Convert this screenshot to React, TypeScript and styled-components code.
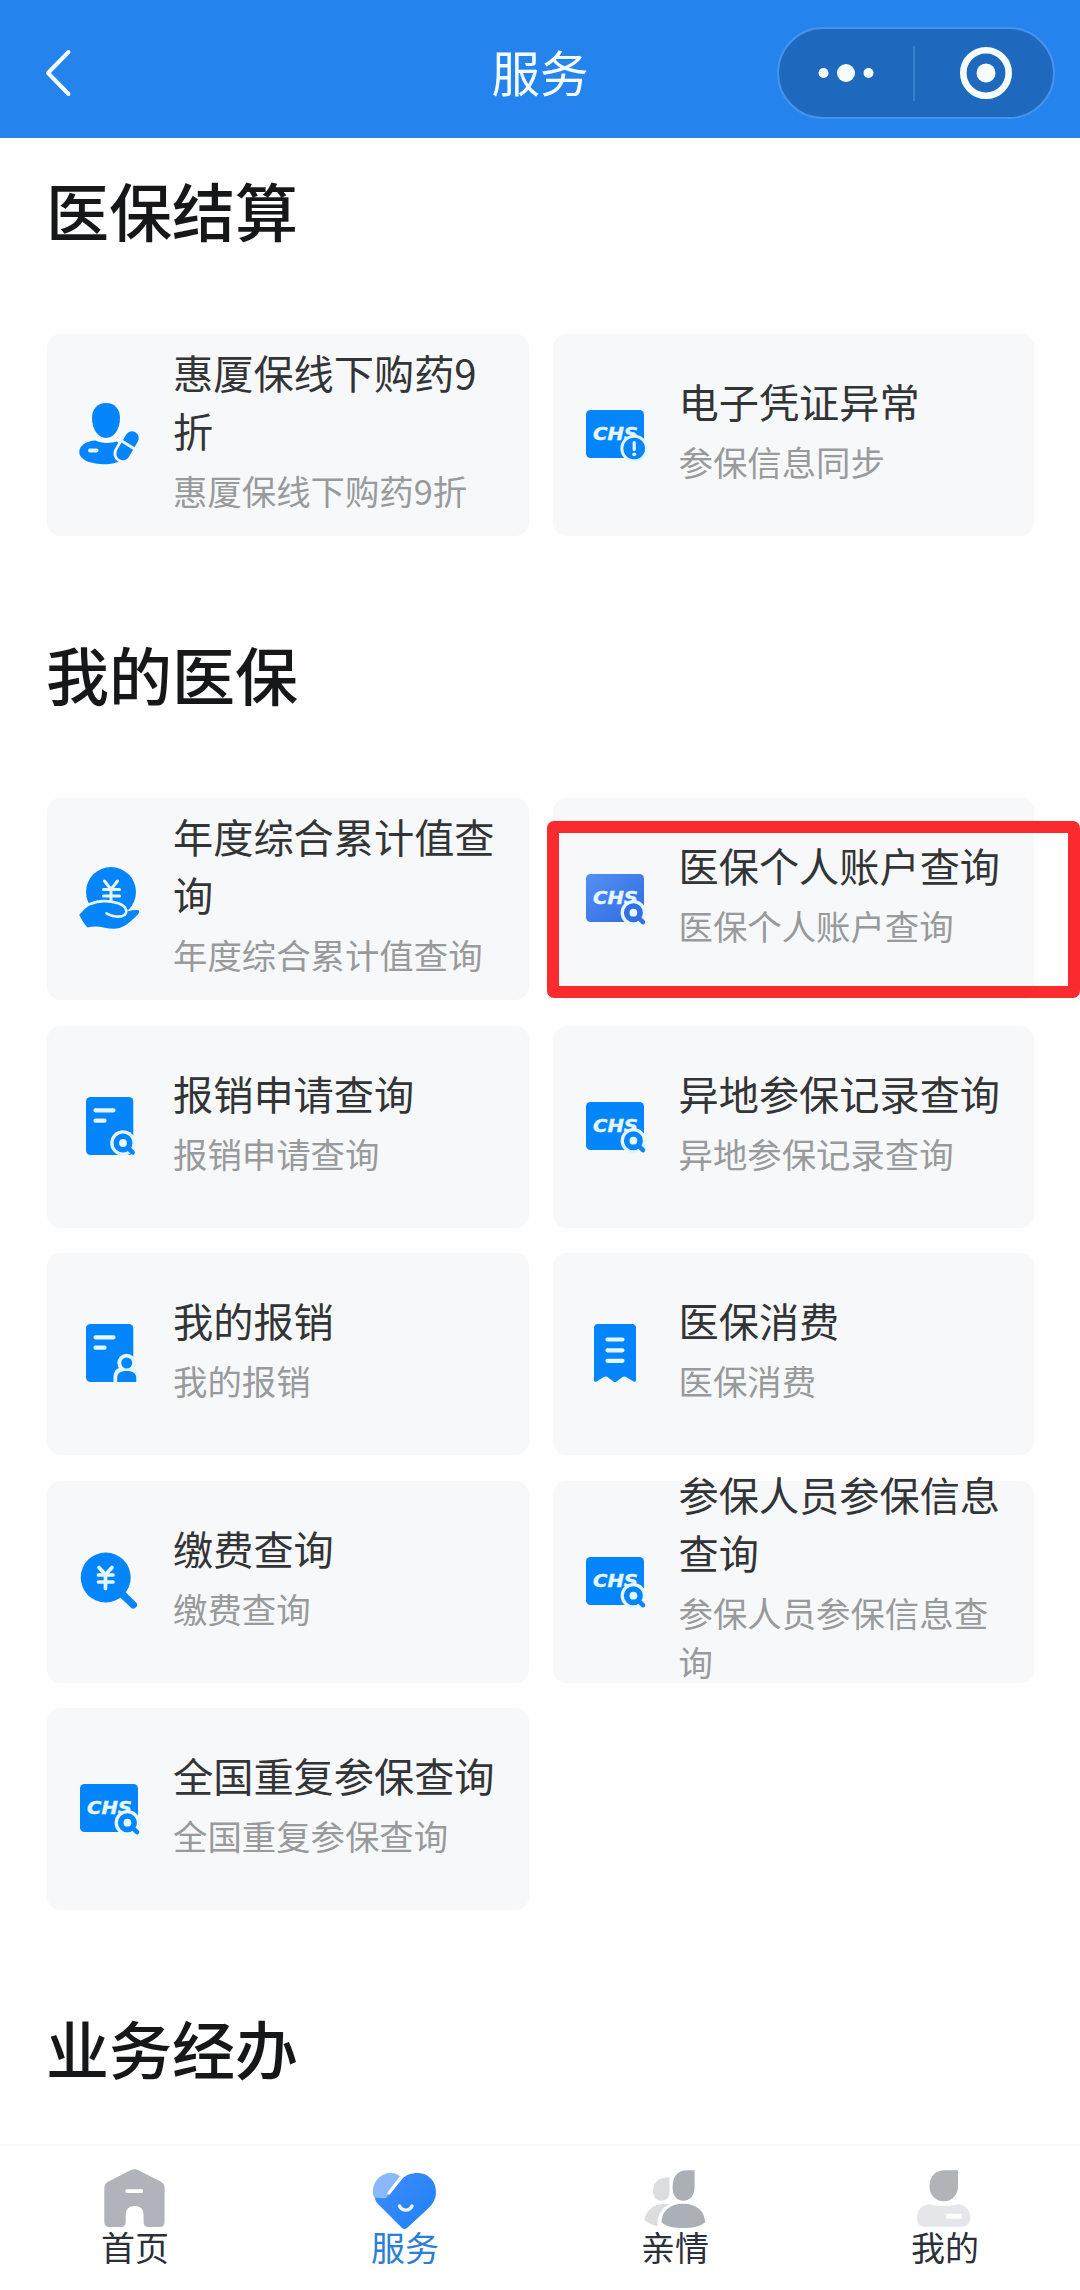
import React from "react";
import styled, { createGlobalStyle } from "styled-components";

const BLUE = "#0585fb";
const CARD = "#f7f8fa";
const PALE = "#e4f6ff";

const GlobalStyle = createGlobalStyle`
  * { box-sizing: border-box; }
  body {
    margin: 0;
    background: #fff;
    font-family: "Noto Sans CJK SC", "Noto Sans", sans-serif;
  }
`;

const Page = styled.div`
  display: flex;
  flex-direction: column;
  width: 1080px;
  height: 2290px;
  overflow: hidden;
  background: #fefefe;
`;

const Header = styled.header`
  flex: none;
  display: grid;
  grid-template-columns: 1fr auto 1fr;
  align-items: center;
  height: 138px;
  padding: 8px 25px 0 44px;
  background: #2483ed;
`;

const BackButton = styled.button`
  justify-self: start;
  display: flex;
  padding: 0;
  border: 0;
  background: none;
`;

const PageTitle = styled.h1`
  margin: 0 0 0 -19px;
  color: #f4fcff;
  font-size: 48.5px;
  font-weight: 400;
  line-height: 60px;
  transform: translateY(-2px);
`;

const Capsule = styled.div`
  justify-self: end;
  display: flex;
  align-items: center;
  width: 278px;
  height: 92px;
  border: 2px solid #4593ec;
  border-radius: 46px;
  background: #1e69be;
`;

const CapsuleButton = styled.button<{ $shift?: number }>`
  flex: 1;
  display: flex;
  justify-content: center;
  padding: 0 0 0 ${(p) => p.$shift ?? 0}px;
  border: 0;
  background: none;
`;

const CapsuleDivider = styled.span`
  width: 2px;
  height: 55px;
  background: #3a7fce;
`;

const Content = styled.main`
  flex: 1;
  min-height: 0;
  overflow: hidden;
  padding: 0 46px 0 47px;
`;

const Section = styled.section<{ $first?: boolean }>`
  padding-top: ${(p) => (p.$first ? 26 : 92)}px;
`;

const SectionTitle = styled.h2`
  margin: 0 0 80px -1px;
  color: #161718;
  font-size: 63px;
  font-weight: 500;
  line-height: 90px;
`;

const Grid = styled.div`
  display: grid;
  grid-template-columns: 1fr 1fr;
  grid-auto-rows: 202px;
  gap: 25.6px 24px;
`;

const Card = styled.article`
  position: relative;
  display: flex;
  align-items: center;
  gap: 31px;
  padding: 0 15px 0 31px;
  border-radius: 14px;
  background: ${CARD};
`;

const CardIcon = styled.svg`
  flex: none;
  width: 64px;
  height: 64px;
`;

const CardText = styled.div`
  flex: 1;
  padding-bottom: 12px;
`;

const CardTitle = styled.div`
  color: #333436;
  font-size: 40.2px;
  line-height: 58px;
`;

const CardNote = styled.div`
  margin-top: 7px;
  color: #989a9b;
  font-size: 34.4px;
  line-height: 49px;
`;

const Highlight = styled.div`
  position: absolute;
  left: -6px;
  top: 23px;
  width: 533px;
  height: 177px;
  border: 12px solid #fa2b2f;
  border-radius: 7px;
`;

const TabBar = styled.nav`
  flex: none;
  display: grid;
  grid-template-columns: repeat(4, 1fr);
  height: 146px;
  border-top: 2px solid #f7f7f8;
  background: #fff;
`;

const Tab = styled.button<{ $active?: boolean }>`
  display: flex;
  flex-direction: column;
  align-items: center;
  padding: 22px 0 0;
  border: 0;
  background: none;
  color: ${(p) => (p.$active ? "#2a80d6" : "#2b303a")};
  font-family: inherit;
  font-size: 34px;
  line-height: 38px;
`;

const TabIcon = styled.svg`
  display: block;
  width: 64px;
  height: 60px;
  overflow: visible;
`;

function Magnifier({ x, y, fill }: { x: number; y: number; fill: string }) {
  return (
    <g>
      <circle cx={x} cy={y} r="12.8" fill={PALE} />
      <path d={`M${x + 4} ${y + 4}L${x + 9.6} ${y + 9.4}`} stroke={fill} strokeWidth="4.6" strokeLinecap="round" />
      <circle cx={x} cy={y} r="6.7" fill={PALE} stroke={fill} strokeWidth="5.6" />
    </g>
  );
}

function ChsCard({ fill = BLUE }: { fill?: string }) {
  return (
    <>
      <rect x="2" y="7" width="58" height="48" rx="4.5" fill={fill} />
      <text
        x="9"
        y="37.2"
        fill={PALE}
        stroke={PALE}
        strokeWidth="0.4"
        fontFamily="DejaVu Sans, sans-serif"
        fontSize="17.5"
        fontWeight="700"
        fontStyle="italic"
        textLength="45"
        lengthAdjust="spacingAndGlyphs"
      >
        CHS
      </text>
    </>
  );
}

function ChsSearch() {
  return (
    <CardIcon viewBox="0 0 64 64">
      <ChsCard />
      <Magnifier x={49.4} y={45.7} fill={BLUE} />
    </CardIcon>
  );
}

function ChsSearchGradient() {
  return (
    <CardIcon viewBox="0 0 64 64">
      <defs>
        <linearGradient id="chsGradient" x1="0" y1="0" x2="1" y2="1">
          <stop offset="0" stopColor="#5590f2" />
          <stop offset="1" stopColor="#2c6be0" />
        </linearGradient>
      </defs>
      <ChsCard fill="url(#chsGradient)" />
      <Magnifier x={49.4} y={45.7} fill="#326fe0" />
    </CardIcon>
  );
}

function ChsAlert() {
  return (
    <CardIcon viewBox="0 0 64 64">
      <ChsCard />
      <circle cx="50.2" cy="45.5" r="13.8" fill={PALE} />
      <circle cx="50.2" cy="45.5" r="10.8" fill={BLUE} />
      <path d="M50.2 39.5V46.5" stroke={PALE} strokeWidth="3.2" strokeLinecap="round" />
      <circle cx="50.2" cy="51.3" r="1.9" fill={PALE} />
    </CardIcon>
  );
}

function PersonPill() {
  return (
    <CardIcon viewBox="0 0 64 64">
      <path d="M28 0C36.5 0 42 6 42 15C42 26 36 35 28 35S14 26 14 15C14 6 19.5 0 28 0Z" fill={BLUE} />
      <path d="M1.3 49C1.3 42 9 38 17.5 37.5C22 40.500 34 40.500 38.500 38.500L44 42V57C38 60.500 32 61.200 27 61.200C14 61.200 1.300 57.500 1.300 49Z" fill={BLUE} />
      <path d="M12 47.500H18.500" stroke={PALE} strokeWidth="4" strokeLinecap="round" />
      <path d="M45 50.500L54 35" stroke={CARD} strokeWidth="19" strokeLinecap="round" />
      <path d="M45 50.500L54 35" stroke={BLUE} strokeWidth="13.500" strokeLinecap="round" />
      <path d="M43 37.500L56.500 46" stroke={PALE} strokeWidth="3" />
    </CardIcon>
  );
}

function YenHand() {
  return (
    <CardIcon viewBox="0 0 64 64">
      <circle cx="33" cy="25" r="25" fill={BLUE} />
      <path
        d="M26.500 14L33 22.500L39.500 14M25.500 22.500H41.500M25.500 29H41.500M33 22.500V36"
        fill="none"
        stroke={PALE}
        strokeWidth="3"
        strokeLinecap="round"
      />
      <path
        d="M1.200 47.800C6 43 10 36.200 22 35.200C33 34.200 44 38.500 46.500 44.500C52 44.500 55 42 61 43.500C62 46.500 58 49.500 54 53C49 57.500 44 61.500 36 61.800C28 62 20 57.500 9.500 60.500C6 57 3 51.500 1.200 47.800Z"
        fill={BLUE}
      />
      <path
        d="M12 37C22 32.500 34 34 41 36.500C47.500 39 50.500 44 46.500 48C42 51 34 49.500 28.500 46.300"
        fill="none"
        stroke={PALE}
        strokeWidth="2.600"
        strokeLinecap="round"
      />
    </CardIcon>
  );
}

function DocumentBase() {
  return (
    <>
      <rect x="8" y="2" width="47.300" height="58" rx="4.500" fill={BLUE} />
      <path d="M17.500 15.300H35.500M17.500 25.700H26.500" stroke={PALE} strokeWidth="4.200" strokeLinecap="round" />
    </>
  );
}

function DocumentSearch() {
  return (
    <CardIcon viewBox="0 0 64 64">
      <DocumentBase />
      <Magnifier x={45} y={48} fill={BLUE} />
    </CardIcon>
  );
}

function DocumentPerson() {
  return (
    <CardIcon viewBox="0 0 64 64">
      <DocumentBase />
      <circle cx="48.700" cy="41" r="9.300" fill={PALE} />
      <path d="M35.500 60V55C35.500 48 40 44.500 48.700 44.500S61 49 61 55V60Z" fill={PALE} />
      <circle cx="48.700" cy="41" r="5.500" fill={BLUE} />
      <path d="M39.200 60V56C39.200 51 42.500 49 48.700 49S58.200 51 58.200 56V60Z" fill={BLUE} />
    </CardIcon>
  );
}

function Receipt() {
  return (
    <CardIcon viewBox="0 0 64 64">
      <path
        d="M14 2H48Q52 2 52 6V58.500Q51.500 60.500 49.500 59.500L41.500 54.800Q40.300 54 39 54.800L32.500 59.500Q31 60.500 29.500 59.500L23 54.800Q21.700 54 20.500 54.800L12.500 59.500Q10.500 60.500 10 58.500V6Q10 2 14 2Z"
        fill={BLUE}
      />
      <path d="M23.500 17.500H38.500M23.500 28.300H38.500M23.500 38.800H38.500" stroke={PALE} strokeWidth="4.200" strokeLinecap="round" />
    </CardIcon>
  );
}

function YenSearch() {
  return (
    <CardIcon viewBox="0 0 64 64">
      <path d="M43 43L55.300 54.800" stroke={BLUE} strokeWidth="7.400" strokeLinecap="round" />
      <circle cx="27.700" cy="27.500" r="25" fill={BLUE} />
      <path
        d="M21 17.500L27.500 24.500L34 17.500M20.500 25H35M20.500 32H35M27.500 24.500V38.500"
        fill="none"
        stroke={PALE}
        strokeWidth="3.700"
        strokeLinecap="round"
      />
    </CardIcon>
  );
}

function HomeIcon() {
  return (
    <TabIcon viewBox="0 0 64 60">
      <path
        d="M28 2Q31.500 0.500 35 2L58.500 14Q61.600 16 61.600 19V54Q61.600 59 56.600 59H45.600Q40.600 59 40.600 54V47Q40.600 38 31.700 38T22.700 47V54Q22.700 59 17.700 59H6.300Q1.300 59 1.300 54V19Q1.300 16 4.500 14Z"
        fill="#b0b3b9"
      />
      <rect x="22.500" y="21.300" width="17.500" height="3.700" rx="1" fill="#fff" />
    </TabIcon>
  );
}

function HeartIcon() {
  return (
    <TabIcon viewBox="0 0 64 60">
      <defs>
        <linearGradient id="heartGradient" x1="0" y1="0" x2="1" y2="1">
          <stop offset="0" stopColor="#3f8df8" />
          <stop offset="1" stopColor="#1f80fa" />
        </linearGradient>
      </defs>
      <path d="M0 26C-1 13 8 5 18 5C23 5 26 7 29 10L14 29.500L2 30Q0.500 29 0 26Z" fill="#8ab8fa" />
      <path
        d="M29 11C33 7 38 5 45 5C56 5 63 14 63 24C63 33 58 38 53 42.500L34 60Q31.500 62 29 60L6 37C3.500 34.500 2 32.500 2 29.800H13Z"
        fill="url(#heartGradient)"
      />
      <path d="M28 9.500L16 25" stroke="#fff" strokeWidth="3.200" strokeLinecap="round" />
      <path d="M26.500 38C29 43.500 36.500 43.500 39 38" fill="none" stroke="#eef6ff" strokeWidth="3.400" strokeLinecap="round" />
    </TabIcon>
  );
}

function FamilyIcon() {
  return (
    <TabIcon viewBox="0 0 64 60">
      <path d="M26.500 9.300V24C26.500 29.500 23 32.700 18.500 32.700C13 32.700 10 28.500 10 23C10 14.500 15.500 9.300 26.500 9.300Z" fill="#dcdddf" />
      <path d="M27 36C19 39 14 47 14.500 58C9 57.500 5 54.500 1.300 52C3 42.500 11 36 20 36Z" fill="#dcdddf" />
      <path d="M51.600 2.300V19C51.600 27.500 47 32.700 40.500 32.700C33.500 32.700 29.600 27.500 29.600 19.500C29.600 9 34 2.300 44 2.300Z" fill="#abafb6" />
      <path d="M40 35.700C53 35.700 62 43 62 54.500C56 59 49 60 40.500 60S24 59 18.500 54.500C18.500 43 27 35.700 40 35.700Z" fill="#abafb6" />
    </TabIcon>
  );
}

function MineIcon() {
  return (
    <TabIcon viewBox="0 0 64 60">
      <path d="M45 2.300V18C45 27 39 33.300 31 33.300C22.500 33.300 16.500 27 16.500 18.500C16.500 8 23 2.300 32 2.300Z" fill="#b0b3b8" />
      <path d="M17 36.200C22 38.500 38 38.500 44 36.200C52 36.500 57.400 42 57.400 49C57.400 56 54 58.800 47 58.800H14C7 58.800 4 56 4 49C4 42 9 36.500 17 36.200Z" fill="#e5e6e9" />
      <rect x="33.300" y="45.800" width="15.500" height="5" rx="1.200" fill="#fff" />
    </TabIcon>
  );
}

interface Service {
  title: string;
  note: string;
  Icon: React.ComponentType;
  highlighted?: boolean;
}

const settlement: Service[] = [
  { title: "惠厦保线下购药9折", note: "惠厦保线下购药9折", Icon: PersonPill },
  { title: "电子凭证异常", note: "参保信息同步", Icon: ChsAlert },
];

const insurance: Service[] = [
  { title: "年度综合累计值查询", note: "年度综合累计值查询", Icon: YenHand },
  { title: "医保个人账户查询", note: "医保个人账户查询", Icon: ChsSearchGradient, highlighted: true },
  { title: "报销申请查询", note: "报销申请查询", Icon: DocumentSearch },
  { title: "异地参保记录查询", note: "异地参保记录查询", Icon: ChsSearch },
  { title: "我的报销", note: "我的报销", Icon: DocumentPerson },
  { title: "医保消费", note: "医保消费", Icon: Receipt },
  { title: "缴费查询", note: "缴费查询", Icon: YenSearch },
  { title: "参保人员参保信息查询", note: "参保人员参保信息查询", Icon: ChsSearch },
  { title: "全国重复参保查询", note: "全国重复参保查询", Icon: ChsSearch },
];

function ServiceGrid({ items }: { items: Service[] }) {
  return (
    <Grid>
      {items.map(({ title, note, Icon, highlighted }) => (
        <Card key={title}>
          <Icon />
          <CardText>
            <CardTitle>{title}</CardTitle>
            <CardNote>{note}</CardNote>
          </CardText>
          {highlighted && <Highlight />}
        </Card>
      ))}
    </Grid>
  );
}

export default function App() {
  return (
    <>
      <GlobalStyle />
      <Page>
        <Header>
          <BackButton aria-label="返回">
            <svg width="28" height="50" viewBox="0 0 28 50">
              <path d="M24.500 4L4 25L24.500 46" fill="none" stroke="#f4fcff" strokeWidth="4" strokeLinecap="round" strokeLinejoin="round" />
            </svg>
          </BackButton>
          <PageTitle>服务</PageTitle>
          <Capsule>
            <CapsuleButton aria-label="更多">
              <svg width="60" height="20" viewBox="0 0 60 20">
                <circle cx="7.500" cy="10" r="5" fill="#f7fdff" />
                <circle cx="30" cy="10" r="9" fill="#f7fdff" />
                <circle cx="52.500" cy="10" r="5" fill="#f7fdff" />
              </svg>
            </CapsuleButton>
            <CapsuleDivider />
            <CapsuleButton aria-label="关闭" $shift={5}>
              <svg width="54" height="54" viewBox="0 0 54 54">
                <circle cx="27" cy="27" r="22.700" fill="none" stroke="#f7fdff" strokeWidth="6.600" />
                <circle cx="27" cy="27" r="9.500" fill="#f7fdff" />
              </svg>
            </CapsuleButton>
          </Capsule>
        </Header>
        <Content>
          <Section $first>
            <SectionTitle>医保结算</SectionTitle>
            <ServiceGrid items={settlement} />
          </Section>
          <Section>
            <SectionTitle>我的医保</SectionTitle>
            <ServiceGrid items={insurance} />
          </Section>
          <Section>
            <SectionTitle>业务经办</SectionTitle>
          </Section>
        </Content>
        <TabBar>
          <Tab>
            <HomeIcon />
            首页
          </Tab>
          <Tab $active>
            <HeartIcon />
            服务
          </Tab>
          <Tab>
            <FamilyIcon />
            亲情
          </Tab>
          <Tab>
            <MineIcon />
            我的
          </Tab>
        </TabBar>
      </Page>
    </>
  );
}
